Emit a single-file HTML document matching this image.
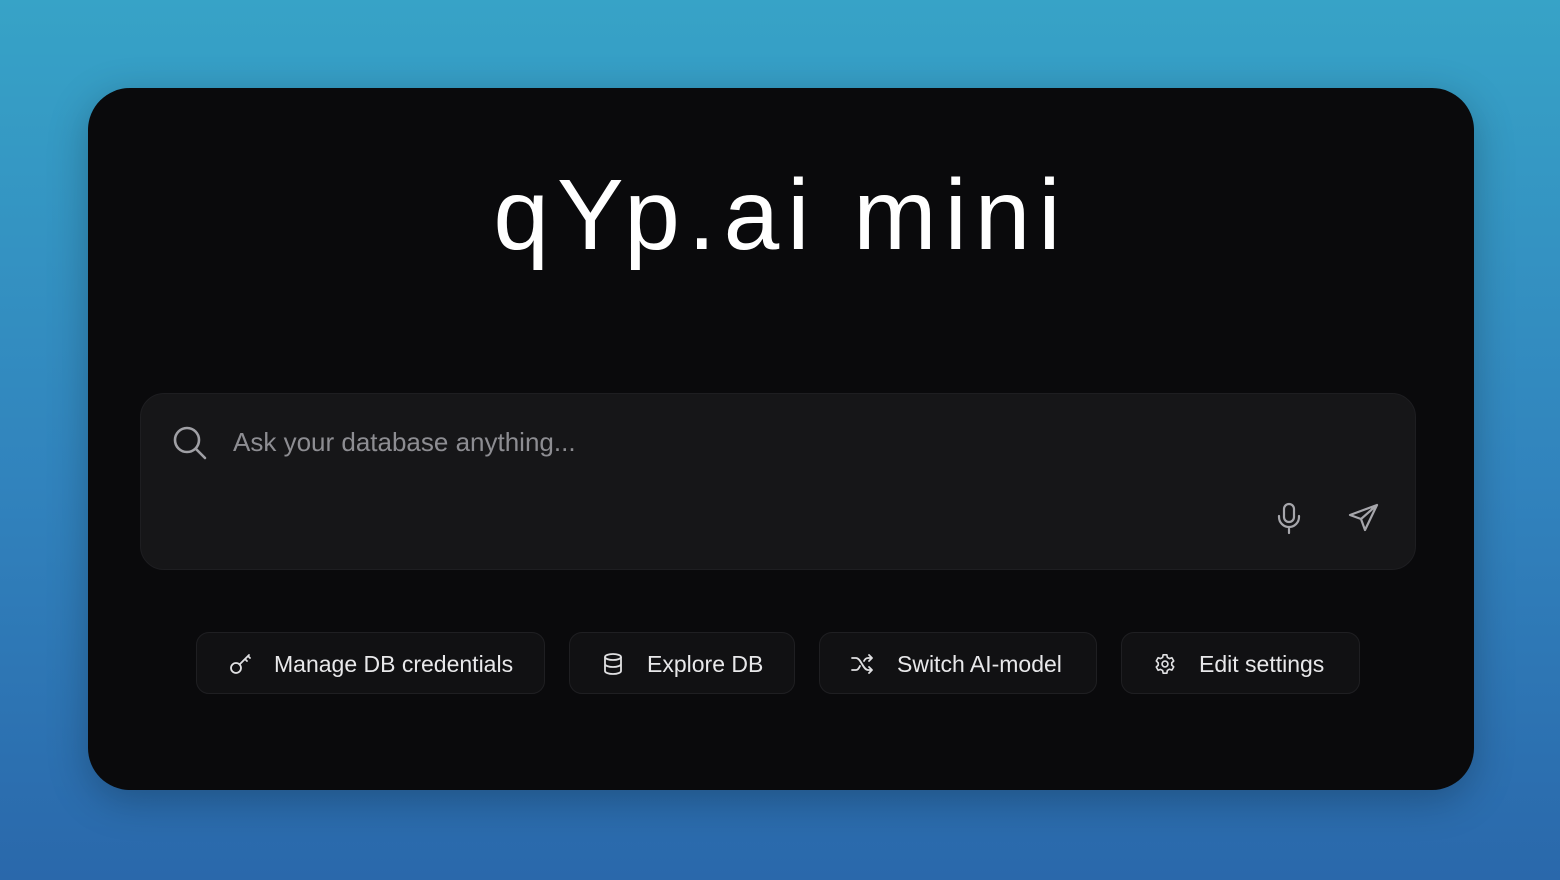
<!DOCTYPE html>
<html><head><style>
html,body{margin:0;padding:0}
body{width:1560px;height:880px;background:linear-gradient(180deg,#37a3c7 0%,#3183bd 55%,#2a68ab 100%);font-family:"Liberation Sans",sans-serif;position:relative;overflow:hidden}
.card{position:absolute;left:88px;top:88px;width:1386px;height:702px;background:#0a0a0c;border-radius:42px;box-shadow:0 10px 40px rgba(0,0,0,.25)}
.title{position:absolute;left:0;width:1386px;top:77px;text-align:center;color:#fff;font-size:100px;font-weight:300;letter-spacing:8px;line-height:1;}
.search{position:absolute;left:52px;top:305px;width:1274px;height:175px;background:#161618;border:1px solid #1e1e21;border-radius:24px}
.ph{position:absolute;left:92px;top:33px;color:#8d8d92;font-size:26px}
.btn{position:absolute;top:544px;height:62px;background:#111113;border:1px solid #1f1f22;border-radius:13px;color:#e8e8ea;font-size:23px;box-sizing:border-box}
.btn span{position:absolute;top:18px}
.btn svg{position:absolute;top:20px}
</style></head><body>
<div class="card">
<div class="title">qYp.ai mini</div>
<div class="search">
<svg style="position:absolute;left:31px;top:31px" width="36" height="36" viewBox="0 0 36 36" fill="none" stroke="#a0a0a5" stroke-width="2.6" stroke-linecap="round"><circle cx="15" cy="15" r="12"/><path d="M24 24l9 9"/></svg>
<div class="ph">Ask your database anything...</div>
<svg style="position:absolute;left:1135px;top:108px" width="26" height="34" viewBox="0 0 26 34" fill="none" stroke="#a6a6ab" stroke-width="2.2" stroke-linecap="round"><rect x="8" y="2" width="10" height="18" rx="5"/><path d="M3 14v1a10 10 0 0 0 20 0v-1M13 25v6"/></svg>
<svg style="position:absolute;left:1207px;top:108px" width="32" height="32" viewBox="0 0 32 32" fill="none" stroke="#a6a6ab" stroke-width="2.2" stroke-linejoin="round" stroke-linecap="round"><path d="M29 3L2 13l11 4 4 11z M29 3L13 17"/></svg>
</div>
<div class="btn" style="left:108px;width:349px">
<svg style="left:32px" width="24" height="22" viewBox="0 0 24 22" fill="none" stroke="#e0e0e2" stroke-width="1.8" stroke-linecap="round"><circle cx="7" cy="15" r="5"/><path d="M11 11l9-9M16 6l2 2M19 3l2 2"/></svg>
<span style="left:77px">Manage DB credentials</span></div>
<div class="btn" style="left:481px;width:226px">
<svg style="left:33px" width="20" height="22" viewBox="0 0 20 22" fill="none" stroke="#e0e0e2" stroke-width="1.8"><ellipse cx="10" cy="4" rx="8" ry="3"/><path d="M2 4v14c0 1.7 3.6 3 8 3s8-1.3 8-3V4M2 11c0 1.7 3.6 3 8 3s8-1.3 8-3"/></svg>
<span style="left:77px">Explore DB</span></div>
<div class="btn" style="left:731px;width:278px">
<svg style="left:30px" width="24" height="22" viewBox="0 0 24 22" fill="none" stroke="#e0e0e2" stroke-width="1.8" stroke-linecap="round" stroke-linejoin="round"><path d="M2 5h4c5 0 7 12 12 12h4M2 17h4c2 0 3-2 4-4M14 8c1-2 2-3 4-3h4M19 2l3 3-3 3M19 14l3 3-3 3"/></svg>
<span style="left:77px">Switch AI-model</span></div>
<div class="btn" style="left:1033px;width:239px">
<svg style="left:32px" width="22" height="22" viewBox="0 0 24 24" fill="none" stroke="#e0e0e2" stroke-width="1.8" stroke-linejoin="round"><circle cx="12" cy="12" r="3.2"/><path d="M10 2h4l.6 2.8 2.2 1.3 2.7-.9 2 3.5-2.1 1.9v2.6l2.1 1.9-2 3.5-2.7-.9-2.2 1.3L14 22h-4l-.6-2.8-2.2-1.3-2.7.9-2-3.5 2.1-1.9v-2.6L2.5 8.7l2-3.5 2.7.9 2.2-1.3z"/></svg>
<span style="left:77px">Edit settings</span></div>
</div>
</body></html>
